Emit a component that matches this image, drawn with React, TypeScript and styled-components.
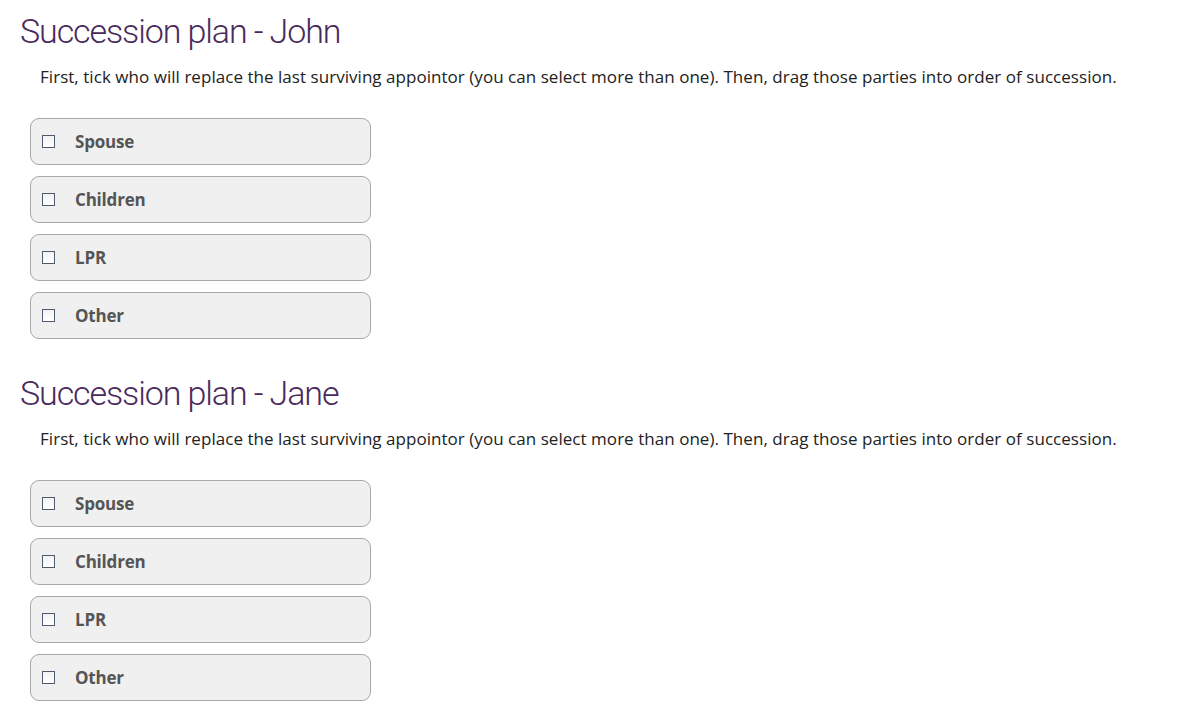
import React from "react";
import styled, { createGlobalStyle } from "styled-components";

const Global = createGlobalStyle`
  html, body { margin: 0; padding: 0; background: #ffffff; }
  body { font-family: "Open Sans", "DejaVu Sans", sans-serif; }
`;

const Page = styled.div`
  padding: 8px 0 0 20px;
  display: flex;
  flex-direction: column;
`;

const Section = styled.section`
  display: flex;
  flex-direction: column;
  margin-bottom: 31px;
`;

const Title = styled.h2`
  margin: 0;
  font-family: Roboto, "Open Sans", sans-serif;
  font-weight: 300;
  font-size: 34px;
  line-height: 47px;
  letter-spacing: -1.1px;
  color: #4a2a5c;
`;

const Intro = styled.p`
  margin: 11px 0 0 20px;
  font-family: "Open Sans", sans-serif;
  font-size: 17px;
  line-height: 22px;
  letter-spacing: 0.04px;
  color: #222222;
`;

const List = styled.div`
  margin: 30px 0 0 10px;
  display: flex;
  flex-direction: column;
  gap: 11px;
`;

const Option = styled.label`
  box-sizing: border-box;
  width: 341px;
  height: 47px;
  display: flex;
  align-items: center;
  padding-left: 11px;
  background: #f0f0f0;
  border: 1px solid #a8a8a8;
  border-radius: 9px;
  cursor: pointer;
`;

const Box = styled.span`
  box-sizing: border-box;
  width: 13px;
  height: 13px;
  border: 1px solid #4e5a6e;
  background: linear-gradient(180deg, #f2f2f2 0%, #ffffff 100%);
  flex: none;
`;

const Label = styled.span`
  margin-left: 20px;
  font-family: "Open Sans", sans-serif;
  font-weight: 700;
  font-size: 17px;
  letter-spacing: -0.2px;
  color: #555555;
`;

const options = ["Spouse", "Children", "LPR", "Other"];

const Plan = ({ name }: { name: string }) => (
  <Section>
    <Title>Succession plan - {name}</Title>
    <Intro>
      First, tick who will replace the last surviving appointor (you can select more than one). Then, drag those parties into order of succession.
    </Intro>
    <List>
      {options.map((o) => (
        <Option key={o}>
          <Box />
          <Label>{o}</Label>
        </Option>
      ))}
    </List>
  </Section>
);

export default function App() {
  return (
    <>
      <Global />
      <Page>
        <Plan name="John" />
        <Plan name="Jane" />
      </Page>
    </>
  );
}
